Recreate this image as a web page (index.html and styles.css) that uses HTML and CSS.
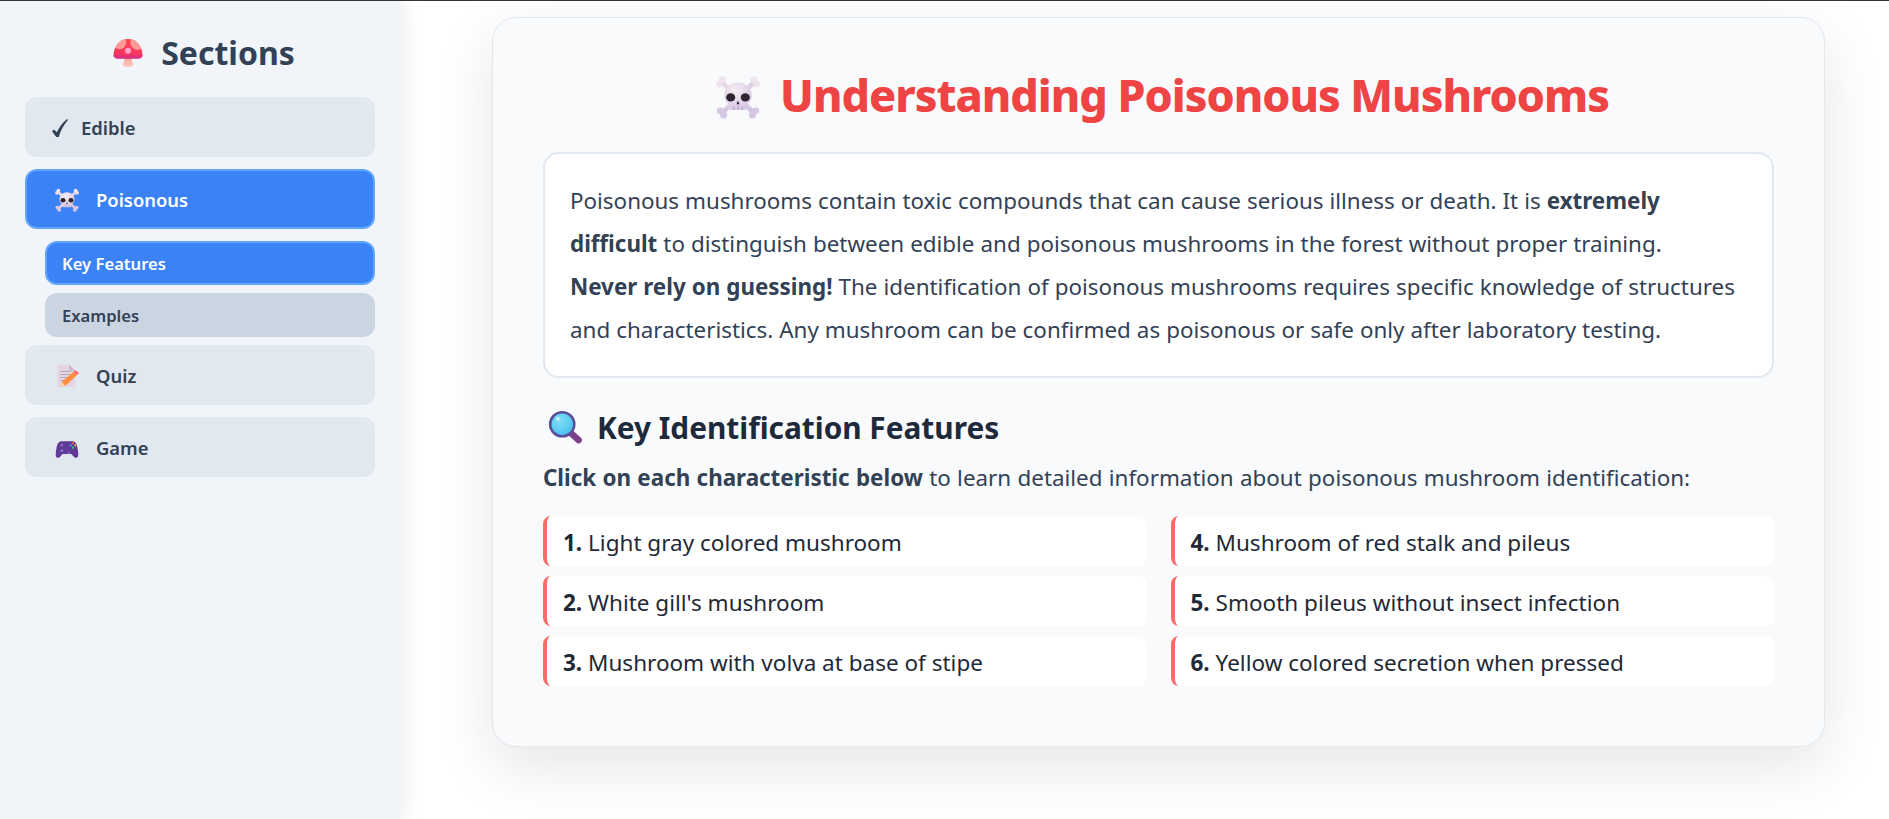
FILE: index.html
```html
<!DOCTYPE html>
<html lang="en">
<head>
<meta charset="utf-8">
<title>Understanding Poisonous Mushrooms</title>
<link rel="stylesheet" href="styles.css">
</head>
<body>
<div class="app">
  <aside class="sidebar">
    <h2 class="side-title"><svg class="ico-title" viewBox="0 0 32 32"><defs><linearGradient id="cap" x1="0" y1="0" x2="0" y2="1"><stop offset="0" stop-color="#ff4650"/><stop offset=".7" stop-color="#f8385a"/><stop offset="1" stop-color="#d92a8a"/></linearGradient><linearGradient id="st" x1="0" y1="0" x2="0" y2="1"><stop offset="0" stop-color="#f5a68f"/><stop offset="1" stop-color="#ffc8c4"/></linearGradient><clipPath id="capclip"><path d="M16 1C7.500 1 .5 9 .5 18.500C.5 20.500 2 22 4 22h24c2 0 3.500-1.500 3.500-3.500C31.500 9 24.500 1 16 1z"/></clipPath></defs><path d="M12.500 20h7c0 3 .5 5 2 7.500c1.200 2-1.500 3.500-5.500 3.500s-6.700-1.500-5.500-3.500c1.500-2.500 2-4.500 2-7.500z" fill="url(#st)"/><path d="M16 1C7.500 1 .5 9 .5 18.500C.5 20.500 2 22 4 22h24c2 0 3.500-1.500 3.500-3.500C31.500 9 24.500 1 16 1z" fill="url(#cap)"/><g clip-path="url(#capclip)"><circle cx="7" cy="5" r="7" fill="#ff9a9a"/><circle cx="26" cy="5" r="7.500" fill="#ff9a9a"/></g><circle cx="16" cy="13.500" r="3.200" fill="#ffa6c8"/></svg><span>Sections</span></h2>
    <nav class="nav">
      <a class="item"><svg class="check" viewBox="0 0 16 18"><path d="M0 12.300L2 10.600L4.800 13.200C7 8.500 10.500 3.500 15 0L16 .9C11.500 6 8.300 12 6.800 18L4.300 18Z" fill="#334155"/></svg>Edible</a>
      <a class="item active"><svg class="ico" viewBox="0 0 32 32"><use href="#skull"/></svg>Poisonous</a>
      <div class="sub">
        <a class="subitem active">Key Features</a>
        <a class="subitem">Examples</a>
      </div>
      <a class="item"><svg class="ico" viewBox="0 0 32 32"><path d="M3 1h16l8 8v22H3z" fill="#e3d6e2"/><path d="M19 1l8 8h-8z" fill="#c9b8cb"/><path d="M7 10h14M7 14h14M7 18h10M7 22h6" stroke="#b5a6ba" stroke-width="1.300"/><path d="M7 30l2-6L24 11l5 4L15 28z" fill="#ff8c3a"/><path d="M24 11l3-3 5 4-3 3z" fill="#ff6a6a"/><path d="M7 30l2-6 4 4z" fill="#ffd9b0"/></svg>Quiz</a>
      <a class="item"><svg class="ico" viewBox="0 0 32 32"><path d="M9 7h14c4 0 6 3 7 9c1 6 2 12-1 13c-3 1-5-3-7-5H10c-2 2-4 6-7 5c-3-1-2-7-1-13c1-6 3-9 7-9z" fill="#5f3a97"/><circle cx="9" cy="12" r="2" fill="#8a6cc4"/><path d="M9 17v5M6.500 19.500h5M15 18h1M18 21v3M16.500 22.500h3" stroke="#8a6cc4" stroke-width="1.400"/><circle cx="24" cy="9.500" r="1.400" fill="#f05a5a"/><circle cx="27" cy="12.500" r="1.400" fill="#f0a83a"/><circle cx="21" cy="12.500" r="1.400" fill="#4a9cf0"/><circle cx="24" cy="15.500" r="1.400" fill="#3ac58a"/></svg>Game</a>
    </nav>
  </aside>
  <main class="main">
    <section class="card">
      <h1 class="heading"><svg class="ico-h1" viewBox="0 0 32 32"><defs><radialGradient id="bone" cx=".4" cy=".3" r=".9"><stop offset="0" stop-color="#f6eef2"/><stop offset="1" stop-color="#cdbde0"/></radialGradient><g id="skull"><path d="M5 6L27 27M27 6L5 27" stroke="url(#bone)" stroke-width="3.400" stroke-linecap="round"/><circle cx="4.500" cy="3.500" r="2.600" fill="#efe4ec"/><circle cx="2.500" cy="6.500" r="2.400" fill="#efe4ec"/><circle cx="27.500" cy="3.500" r="2.600" fill="#efe4ec"/><circle cx="29.500" cy="6.500" r="2.400" fill="#efe4ec"/><circle cx="3" cy="26" r="2.400" fill="#d6c8e4"/><circle cx="5.500" cy="29" r="2.600" fill="#d6c8e4"/><circle cx="29" cy="26" r="2.400" fill="#d6c8e4"/><circle cx="26.500" cy="29" r="2.600" fill="#d6c8e4"/><path d="M16 5.500c5.800 0 10 4 10 9.500c0 3-1.500 5-3.500 6v2.500c0 1-1 2-2 2h-9c-1 0-2-1-2-2V21c-2-1-3.500-3-3.500-6c0-5.500 4.200-9.500 10-9.500z" fill="url(#bone)"/><ellipse cx="10.700" cy="16.300" rx="3.300" ry="3" fill="#2f2430"/><ellipse cx="21.300" cy="16.300" rx="3.300" ry="3" fill="#2f2430"/><path d="M16 18.800l1.100 2.400h-2.200z" fill="#2f2430"/><path d="M13 22.500v3M16 22.500v3M19 22.500v3" stroke="#b9a7cf" stroke-width=".8"/></g></defs><use href="#skull"/></svg><span class="heading-text">Understanding Poisonous Mushrooms</span></h1>
      <div class="intro">
        <p>Poisonous mushrooms contain toxic compounds that can cause serious illness or death. It is <strong>extremely</strong><br><strong>difficult</strong> to distinguish between edible and poisonous mushrooms in the forest without proper training.<br><strong>Never rely on guessing!</strong> The identification of poisonous mushrooms requires specific knowledge of structures<br>and characteristics. Any mushroom can be confirmed as poisonous or safe only after laboratory testing.</p>
      </div>
      <h2 class="subhead"><svg class="ico-h2" viewBox="0 0 32 32"><defs><radialGradient id="gl" cx=".4" cy=".35" r=".8"><stop offset="0" stop-color="#7fe0f5"/><stop offset="1" stop-color="#3fb8ea"/></radialGradient></defs><path d="M22 22l6 5.500" stroke="#7b3f8a" stroke-width="6" stroke-linecap="round"/><circle cx="13" cy="13" r="11" fill="url(#gl)" stroke="#5b4f9c" stroke-width="2.400"/><circle cx="9" cy="8" r="1.800" fill="#c8f2fb"/></svg><span>Key Identification Features</span></h2>
      <p class="lead"><strong>Click on each characteristic below</strong> to learn detailed information about poisonous mushroom identification:</p>
      <div class="features">
        <div class="feature"><strong>1.</strong> Light gray colored mushroom</div>
        <div class="feature"><strong>4.</strong> Mushroom of red stalk and pileus</div>
        <div class="feature"><strong>2.</strong> White gill's mushroom</div>
        <div class="feature"><strong>5.</strong> Smooth pileus without insect infection</div>
        <div class="feature"><strong>3.</strong> Mushroom with volva at base of stipe</div>
        <div class="feature"><strong>6.</strong> Yellow colored secretion when pressed</div>
      </div>
    </section>
  </main>
</div>
</body>
</html>
```
FILE: styles.css
```css
* { box-sizing: border-box; }
html, body { margin: 0; height: 100%; overflow: hidden; }
body { font-family: "Noto Sans", "Open Sans", sans-serif; background: #fff; color: #1e293b; border-top: 1px solid #333; }
.app { display: flex; height: 818px; }
.sidebar { width: 400px; flex: none; background: #f1f5f9; padding: 34px 25px 0; box-shadow: 4px 0 20px rgba(0,0,0,.08); }
.side-title { display: flex; align-items: center; justify-content: center; gap: 18px; margin: 0 0 26px 8px; height: 36px; font-size: 32px; font-weight: 700; color: #334155; line-height: 36px; }
.ico-title { width: 30px; height: 30px; }
.nav { display: flex; flex-direction: column; }
.item { display: flex; align-items: center; height: 60px; margin-bottom: 12px; padding: 0 0 0 30px; gap: 17px; background: #e2e8f0; border-radius: 12px; font-size: 18.4px; font-weight: 600; color: #334155; }
.item.active { background: #3b82f6; color: #fff; border: 2px solid #60a5fa; padding: 0 0 0 28px; }
.ico { width: 24px; height: 24px; margin-top: 2px; }
.check { width: 16px; height: 18px; margin: 2px -4px 0 -3px; }
.sub { display: flex; flex-direction: column; gap: 8px; margin: 0 0 8px 20px; }
.subitem { display: flex; align-items: center; height: 44px; padding: 0 0 0 17px; background: #cbd5e1; border-radius: 12px; font-size: 16.6px; font-weight: 600; color: #334155; }
.subitem.active { background: #3b82f6; color: #fff; border: 2px solid #60a5fa; padding: 0 0 0 15px; }
.main { flex: 1; padding: 16px 0 0 92px; min-width: 0; }
.card { width: 1333px; height: 730px; padding: 50px; background: #f8fafc; border: 1px solid #e2e8f0; border-radius: 24px; box-shadow: 0 20px 60px rgba(0,0,0,.1); }
.heading { display: flex; align-items: center; justify-content: center; gap: 20px; margin: 0 0 27px 8px; height: 57px; font-size: 44.8px; font-weight: 800; letter-spacing: -1px; color: #ef4444; line-height: 57px; }
.heading-text { margin-top: -4px; }
.ico-h1 { width: 44px; height: 44px; }
.intro { height: 226px; padding: 25px; background: #fff; border: 2px solid #e2e8f0; border-radius: 16px; margin-bottom: 28px; }
.intro p { margin: 0; font-size: 22.4px; line-height: 43px; color: #334155; white-space: nowrap; word-spacing: .2px; }
.intro strong { font-weight: 700; }
.subhead { display: flex; align-items: center; gap: 14px; margin: 0 0 12px 5px; height: 42px; font-size: 29.8px; font-weight: 700; color: #1e293b; }
.ico-h2 { width: 35px; height: 35px; }
.lead { margin: 0 0 20px; font-size: 22.4px; line-height: 36px; color: #334155; word-spacing: .5px; }
.features { display: grid; grid-template-columns: 1fr 1fr; gap: 10px 24px; }
.feature { height: 50px; padding: 0 16px; line-height: 53px; background: #fff; border-left: 4px solid #ff6b6b; border-radius: 8px; font-size: 22.5px; color: #1f2937; }
```
